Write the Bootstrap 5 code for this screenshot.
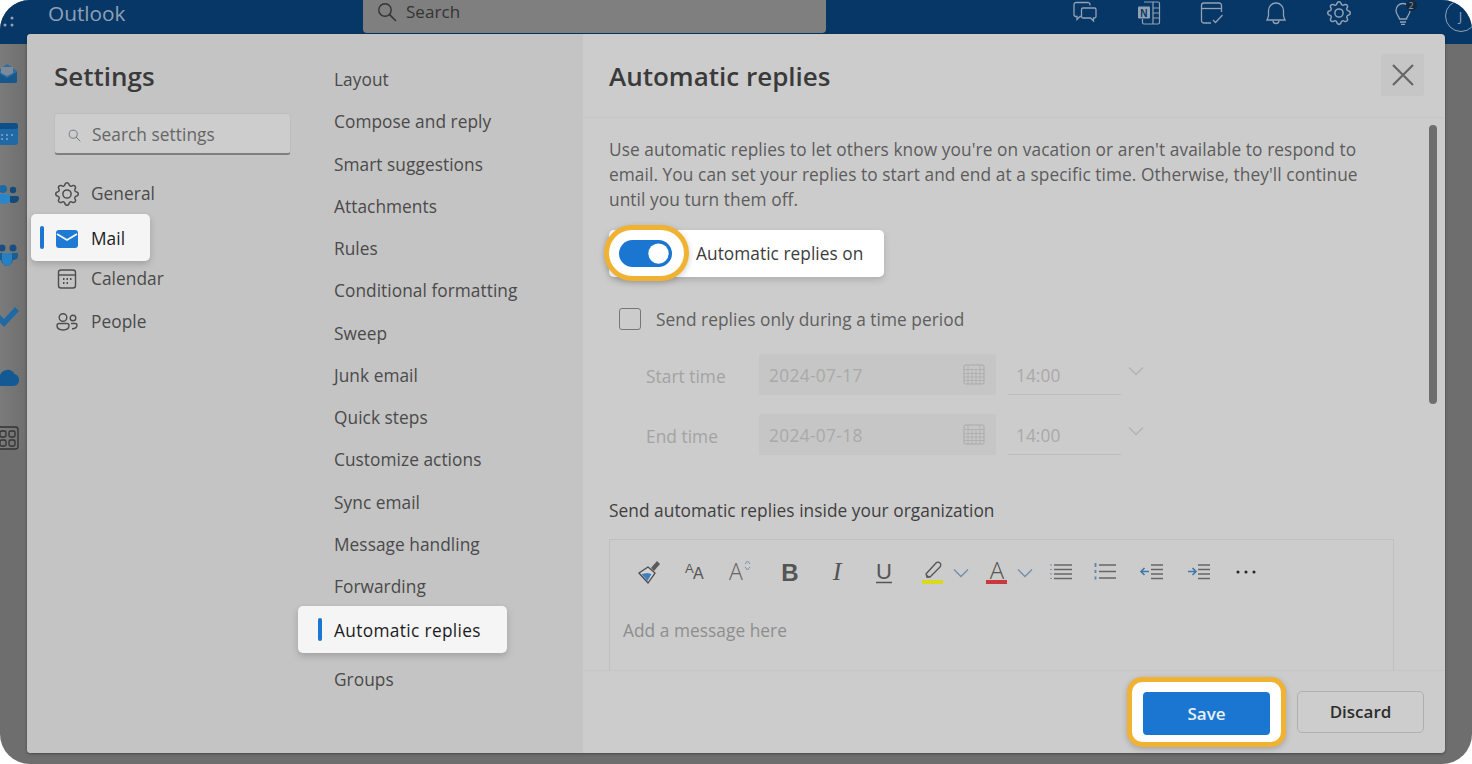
<!DOCTYPE html>
<html lang="en">
<head>
<meta charset="utf-8">
<title>Outlook settings</title>
<link href="https://cdn.jsdelivr.net/npm/bootstrap@5.3.0/dist/css/bootstrap.min.css" rel="stylesheet">
<style>
html,body{height:100%;margin:0;background:#fff;overflow:hidden}
body{font-family:"Open Sans","Noto Sans",sans-serif;font-size:17.3px;color:#4a4a4a;letter-spacing:.05px}
.app{width:1472px;height:764px;border-radius:30px;overflow:hidden;background:#6e6e6e;position:relative}
.topbar{height:44px;background:#073766;align-items:flex-start}
.topbar>*{flex:none}
.waffle{width:48px;height:32px;color:#8ea1b6;padding:8px 0 0 3px}
.brand{font-size:20.800px;color:#8ea1b6;width:315px;line-height:26px;letter-spacing:0}
.searchbox{width:463px;height:33px;background:#7f7f7f;border-radius:0 0 4px 4px;padding:0 0 9px 14px;gap:9px;color:#333;font-size:17px}
.topicons{margin-left:247px;gap:39.5px;padding-top:1px;color:#92a2b3}
.topicons svg{width:24px;height:24px;display:block}
.bulb{position:relative}
.bulb .count{position:absolute;left:15px;top:-1px;width:11px;height:11px;border-radius:50%;background:#14293f;color:#8ea1b6;font-size:9px;text-align:center;line-height:11px}
.avatar{width:32px;height:32px;border:1px solid #8ea1b6;border-radius:50%;margin:0 0 0 30px;color:#8ea1b6;font-size:13px;line-height:30px;text-align:center}
.rail{width:27px;padding-top:17px;gap:36.8px;background:linear-gradient(90deg,#7b7b7b,#6e6e6e)}
.rail svg{width:24px;height:24px;margin-left:-5px;display:block;flex:none}
.settings{position:absolute;left:27px;top:34px;width:1418px;height:719px;border-radius:4px;box-shadow:0 1px 3px rgba(0,0,0,.35);background:#ccc;overflow:visible}
.leftpane{width:556px;background:#c4c4c4;border-radius:4px 0 0 4px;flex:none}
.col-cat{width:271px;padding-left:27px;flex:none}
.title{font-size:26px;font-weight:600;color:#3a3a3a;line-height:36px;letter-spacing:0}
.col-cat .title{margin-top:24px}
.searchset{width:237px;height:42px;margin-top:19px;background:#cdcdcd;border:1px solid #bdbdbd;border-bottom:2px solid #7f7f7f;border-radius:4px;padding:3px 0 0 13px;gap:11px;color:#666}
.catlist{margin-top:17px}
.catlist .nav-link,.sublist .nav-link{color:#4a4a4a;padding:2px 0 0;height:42.250px;display:flex;align-items:center;position:relative;white-space:nowrap}
.catlist .nav-link{gap:12px;padding-left:1px}
.catlist svg{width:24px;height:24px;flex:none;color:#4d4d4d}
.nav-link.current{background:#f5f5f5;color:#1c1c1c;font-weight:500;border-radius:5px;height:47px;box-shadow:0 3px 7px rgba(0,0,0,.18);z-index:2}
.nav-link.current::before{content:"";position:absolute;width:4px;height:23px;top:12px;background:#1a76d0;border-radius:2px}
.catlist .nav-link.current{height:47px;width:119px;margin-left:-23px;padding-left:24px;margin-bottom:-4px}
.catlist .nav-link.current::before{left:9px}
.sublist{padding-top:24px;width:209px;flex:none;flex-wrap:nowrap;align-items:flex-start}
.sublist .nav-link{padding-left:36px}
.sublist .nav-link.current{width:209px;height:47px;margin:-1px 0 5px;letter-spacing:.35px}
.sublist .nav-link.current::before{left:20px}
.rightpane{min-width:0}
.rhead{height:84px;padding:0 21px 0 26px;border-bottom:1px solid #c6c6c6;flex:none}
.rhead .title{padding-top:1px}
.closebtn{width:43px;height:42px;background:#c6c6c6;border:0;border-radius:3px;padding:0;color:#666;margin-top:-2px}
.rbody{height:552px;padding:19px 0 0 26px;position:relative;overflow:hidden;flex:none}
.intro{width:762px;line-height:25px;margin:0 0 17.500px;color:#5c5c5c;letter-spacing:.08px}
.spot{height:47px;background:#fff;border-radius:5px;padding-right:21px;box-shadow:0 3px 7px rgba(0,0,0,.15);color:#3d3d3d}
.spot>span{padding-top:2px}
.ring{width:85px;height:56px;border:5px solid #f0b232;border-radius:28px;background:#fff;margin:-4.500px 7px -4.500px -5px;flex:none;box-shadow:0 2px 6px rgba(0,0,0,.2)}
.form-switch.ring{padding:0 2px 0 0}
.form-switch .autoswitch{width:53px;height:27px;margin:0;background-color:#1a76d0;border:0;float:none;opacity:1}
.timecheck{margin:31px 0 0 10px;gap:15px;color:#5f5f5f;height:22px}
.timecheck>span{padding-top:3px}
.timecheck .form-check-input{width:22px;height:22px;margin:0;background-color:transparent;border:1px solid #777;border-radius:3px;flex:none}
.timerow{margin-left:37px;color:#a3a3a3;height:41px}
.timerow.first{margin-top:24px}
.timerow.second{margin-top:19px}
.timelabel{width:113px;padding-top:6px}
.dateinput{width:237px;height:41px;background:#c6c6c6;padding:0 11px 0 10px;color:#a9a9a9;border-radius:2px;letter-spacing:.35px}
.dateinput>span{padding-top:3px}
.dateinput svg{width:22px;height:22px}
.timeselect{width:113px;height:41px;margin-left:12px;padding:5px 0 0 8px;border-bottom:1px solid #bdbdbd;color:#a9a9a9}
.chev{width:16px;height:10px;margin:-6px 0 0 7px;color:#b2b2b2}
.orghead{margin:43px 0 0;line-height:25px;color:#3f3f3f}
.editor{width:785px;height:200px;margin-top:16px;border:1px solid #bfbfbf;border-bottom:0;padding:20px 0 0 15px}
.tool{width:47px;height:24px;flex:none;display:flex;justify-content:center}
.tool svg{width:24px;height:24px;overflow:visible}
.tool.free{width:24px;margin-left:16px}
.tool.free.first{margin-left:14px}
.tool svg text{font-family:"Liberation Sans",sans-serif;letter-spacing:0}
.tool svg text.thin{font-family:"Open Sans",sans-serif;font-weight:300}
.tool svg text.serif{font-family:"Liberation Serif",serif;font-style:italic}
.chevblue{width:16px;height:10px;margin:8px 0 0 8px;color:#6f8fae;flex:none}
.msg-hint{margin:34px 0 0 -2px;color:#8e8e8e}
.vbar{position:absolute;left:846px;top:7px;width:8px;height:279px;border-radius:4px;background:#6e6e6e}
.rfoot{height:83px;border-top:1px solid #c6c6c6;padding:6px 21px 0 0;gap:11px;flex:none}
.savering{width:159px;height:70px;border:5px solid #f0b232;border-radius:15px;background:#fff;padding-top:3px;box-shadow:0 2px 6px rgba(0,0,0,.2)}
.btn-save{width:127px;height:43px;background:#1a76d0;border:0;border-radius:4px;color:#e8f0f8;font-weight:600;font-size:17px;padding:1px 0 0}
.btn-discard{width:127px;height:42px;margin-top:14px;background:#cdcdcd;border:1px solid #b0b0b0;border-radius:5px;color:#2e2e2e;font-weight:600;font-size:17px;padding:0}
</style>
</head>
<body>
<svg width="0" height="0" class="position-absolute">
  <defs>
    <symbol id="gear" viewBox="0 0 16 16"><path fill="currentColor" d="M8 4.754a3.246 3.246 0 1 0 0 6.492 3.246 3.246 0 0 0 0-6.492zM5.754 8a2.246 2.246 0 1 1 4.492 0 2.246 2.246 0 0 1-4.492 0z"/><path fill="currentColor" d="M9.796 1.343c-.527-1.79-3.065-1.79-3.592 0l-.094.319a.873.873 0 0 1-1.255.52l-.292-.16c-1.64-.892-3.433.902-2.54 2.541l.159.292a.873.873 0 0 1-.52 1.255l-.319.094c-1.79.527-1.79 3.065 0 3.592l.319.094a.873.873 0 0 1 .52 1.255l-.16.292c-.892 1.64.901 3.434 2.541 2.54l.292-.159a.873.873 0 0 1 1.255.52l.094.319c.527 1.79 3.065 1.79 3.592 0l.094-.319a.873.873 0 0 1 1.255-.52l.292.16c1.64.893 3.434-.902 2.54-2.541l-.159-.292a.873.873 0 0 1 .52-1.255l.319-.094c1.79-.527 1.79-3.065 0-3.592l-.319-.094a.873.873 0 0 1-.52-1.255l.16-.292c.893-1.64-.902-3.433-2.541-2.54l-.292.159a.873.873 0 0 1-1.255-.52l-.094-.319zm-2.633.283c.246-.835 1.428-.835 1.674 0l.094.319a1.873 1.873 0 0 0 2.693 1.115l.291-.16c.764-.415 1.6.42 1.184 1.185l-.159.292a1.873 1.873 0 0 0 1.116 2.692l.318.094c.835.246.835 1.428 0 1.674l-.319.094a1.873 1.873 0 0 0-1.115 2.693l.16.291c.415.764-.42 1.6-1.185 1.184l-.291-.159a1.873 1.873 0 0 0-2.693 1.116l-.094.318c-.246.835-1.428.835-1.674 0l-.094-.319a1.873 1.873 0 0 0-2.692-1.115l-.292.16c-.764.415-1.6-.42-1.184-1.185l.159-.291A1.873 1.873 0 0 0 1.945 8.93l-.319-.094c-.835-.246-.835-1.428 0-1.674l.319-.094A1.873 1.873 0 0 0 3.06 4.377l-.16-.292c-.415-.764.42-1.6 1.185-1.184l.292.159a1.873 1.873 0 0 0 2.692-1.115l.094-.319z"/></symbol>
    <symbol id="searchico" viewBox="0 0 20 20"><circle cx="8" cy="8" r="6.200" fill="none" stroke="currentColor" stroke-width="1.400"/><path d="M12.600 12.600L18.500 18.500" stroke="currentColor" stroke-width="1.500" stroke-linecap="round"/></symbol>
    <symbol id="dcal" viewBox="0 0 22 22"><rect x="1" y="2" width="20" height="19" rx="1.500" fill="none" stroke="currentColor"/><path d="M1 6.500h20M1 10.500h20M1 14h20M1 17.500h20M5 2v19M9 6.500v14.500M13 6.500v14.500M17 2v19" stroke="currentColor" stroke-width=".7" fill="none"/></symbol>
    <symbol id="chevron" viewBox="0 0 16 10"><path d="M1 1.500l7 7 7-7" fill="none" stroke="currentColor" stroke-width="1.300"/></symbol>
  </defs>
</svg>
<div class="app">
  <header class="topbar d-flex">
    <div class="waffle">
      <svg width="12" height="14" viewBox="0 0 12 14" fill="currentColor"><circle cx="2" cy="10" r="1.500"/><circle cx="9" cy="3" r="1.500"/><circle cx="9" cy="10" r="1.500"/></svg>
    </div>
    <div class="brand">Outlook</div>
    <div class="searchbox d-flex align-items-center"><svg width="20" height="20" class="flex-none"><use href="#searchico"/></svg><span>Search</span></div>
    <div class="topicons d-flex">
      <svg viewBox="0 0 24 24" fill="none" stroke="currentColor" stroke-width="1.300"><path d="M17 4.500V3.500a2 2 0 0 0-2-2H3a2 2 0 0 0-2 2v10a2 2 0 0 0 2 2h1v3l3-3h1"/><path d="M10 7h11.500a1.500 1.500 0 0 1 1.500 1.500v7a1.500 1.500 0 0 1-1.500 1.500h-1v3l-3-3H10a1.500 1.500 0 0 1-1.500-1.500v-7A1.500 1.500 0 0 1 10 7z"/></svg>
      <svg viewBox="0 0 24 24" fill="none" stroke="currentColor" stroke-width="1.200"><path d="M7 1h14a1.500 1.500 0 0 1 1.500 1.500v19A1.500 1.500 0 0 1 21 23H7a1.500 1.500 0 0 1-1.500-1.500V18"/><path d="M16 1v22M16 7h6.500M16 12h6.500M16 17h6.500"/><rect x="1" y="5.500" width="12" height="12" rx="1" fill="#92a2b3" stroke="none"/><text x="7" y="15.500" text-anchor="middle" font-size="10" font-weight="700" fill="#073766" stroke="none" font-family="Liberation Sans">N</text></svg>
      <svg viewBox="0 0 24 24" fill="none" stroke="currentColor" stroke-width="1.300"><path d="M11 22H4a2.500 2.500 0 0 1-2.500-2.500v-15A2.500 2.500 0 0 1 4 2h15a2.500 2.500 0 0 1 2.500 2.500V11"/><path d="M1.500 7.500h20"/><path d="M13 19l2.500 2.500 7-7.500"/></svg>
      <svg viewBox="0 0 24 24" fill="none" stroke="currentColor" stroke-width="1.300"><path d="M12 2a7.500 7.500 0 0 0-7.500 7.500V15L3 19h18l-1.500-4V9.500A7.500 7.500 0 0 0 12 2z"/><path d="M9 19.500a3 3 0 0 0 6 0"/></svg>
      <svg viewBox="0 0 16 16"><use href="#gear"/></svg>
      <span class="bulb"><svg viewBox="0 0 24 24" fill="none" stroke="currentColor" stroke-width="1.300"><path d="M8.500 18c0-2.500-3.500-4-3.500-8.500a7 7 0 0 1 14 0c0 4.500-3.500 6-3.500 8.500z"/><path d="M9 21h6M10 23.500h4"/></svg><span class="count">2</span></span>
    </div>
    <div class="avatar">J</div>
  </header>
  <nav class="rail d-flex flex-column">
    <svg viewBox="0 0 24 24"><path d="M2 10l10-7 10 7v10a2 2 0 0 1-2 2H4a2 2 0 0 1-2-2z" fill="#2a6ea5"/><path d="M6 6h12v6l-6 3-6-3z" fill="#7b8a96"/><path d="M2 11l10 6 10-6v9a2 2 0 0 1-2 2H4a2 2 0 0 1-2-2z" fill="#17578c"/></svg>
    <svg viewBox="0 0 24 24"><rect x="1" y="1" width="22" height="22" rx="3" fill="#1f6aa6"/><rect x="1" y="1" width="22" height="6" rx="3" fill="#0f4f87"/><path d="M6 12h2v2H6zM11 12h2v2h-2zM16 12h2v2h-2zM6 16h2v2H6zM11 16h2v2h-2z" fill="#6e96b8"/></svg>
    <svg viewBox="0 0 24 24"><circle cx="8" cy="6" r="4" fill="#1b6aa5"/><circle cx="18" cy="7" r="3.200" fill="#134a78"/><path d="M0 14a3 3 0 0 1 3-3h10a3 3 0 0 1 3 3c0 5-3 7-7 7s-9-2-9-7z" fill="#2a86c9"/><path d="M15 13h7a2 2 0 0 1 2 2c0 3-2 5-6 5-1 0-2 0-3-1z" fill="#134a78"/></svg>
    <svg viewBox="0 0 24 24"><circle cx="7" cy="5" r="3.500" fill="#184f80"/><circle cx="18" cy="5" r="3.500" fill="#184f80"/><path d="M1 10h22v3c0 3-3 4-5 4-1 4-4 6-6 6s-5-2-6-6c-2 0-5-1-5-4z" fill="#1a5e96"/><path d="M7 10h10v7c0 3-2 6-5 6s-5-3-5-6z" fill="#2a7fc0"/></svg>
    <svg viewBox="0 0 24 24"><path d="M0 14l4-4 5 5L20 3l4 4L9 23z" fill="#1f6aa6"/></svg>
    <svg viewBox="0 0 24 24"><path d="M6 21a5.500 5.500 0 0 1-1-10.900A8 8 0 0 1 19.500 9 6 6 0 0 1 24 15a5.500 5.500 0 0 1-5.500 6z" fill="#135a94"/></svg>
    <svg viewBox="0 0 24 24" fill="none" stroke="#333" stroke-width="1.300"><rect x="1" y="1" width="22" height="22" rx="2.500"/><rect x="5" y="5" width="6" height="6" rx="1.500"/><rect x="14" y="5" width="6" height="6" rx="1.500"/><rect x="5" y="14" width="6" height="6" rx="1.500"/><rect x="14" y="14" width="6" height="6" rx="1.500"/></svg>
  </nav>

  <section class="settings d-flex">
    <aside class="leftpane d-flex">
      <div class="col-cat">
        <div class="title">Settings</div>
        <div class="searchset d-flex align-items-center"><svg width="13" height="13" class="text-secondary"><use href="#searchico"/></svg><span>Search settings</span></div>
        <nav class="nav flex-column catlist">
          <a class="nav-link" href="#"><svg viewBox="0 0 16 16"><use href="#gear"/></svg>General</a>
          <a class="nav-link current" href="#"><svg viewBox="0 0 24 24"><path d="M1 6a3 3 0 0 1 3-3h16a3 3 0 0 1 3 3v12a3 3 0 0 1-3 3H4a3 3 0 0 1-3-3z" fill="#1f7ad4"/><path d="M2 7l10 6 10-6" fill="none" stroke="#f5f5f5" stroke-width="1.800"/></svg>Mail</a>
          <a class="nav-link" href="#"><svg viewBox="0 0 24 24" fill="none" stroke="currentColor" stroke-width="1.400"><rect x="3.500" y="3" width="17" height="18" rx="2.500"/><path d="M3.500 8h17"/><path d="M8 12h1.500M11.500 12H13M15 12h1.500M8 16h1.500M11.500 16H13" stroke-width="2"/></svg>Calendar</a>
          <a class="nav-link" href="#"><svg viewBox="0 0 24 24" fill="none" stroke="currentColor" stroke-width="1.400"><circle cx="8" cy="7.500" r="3.800"/><circle cx="18" cy="8" r="2.800"/><path d="M2 15.500a2 2 0 0 1 2-2h8a2 2 0 0 1 2 2c0 3-2.500 4.500-6 4.500s-6-1.500-6-4.500z"/><path d="M16 13.500h4.500a1.500 1.500 0 0 1 1.500 1.500c0 2.500-2 4-5 3.800"/></svg>People</a>
        </nav>
      </div>
      <nav class="nav flex-column sublist">
        <a class="nav-link" href="#">Layout</a>
        <a class="nav-link" href="#">Compose and reply</a>
        <a class="nav-link" href="#">Smart suggestions</a>
        <a class="nav-link" href="#">Attachments</a>
        <a class="nav-link" href="#">Rules</a>
        <a class="nav-link" href="#">Conditional formatting</a>
        <a class="nav-link" href="#">Sweep</a>
        <a class="nav-link" href="#">Junk email</a>
        <a class="nav-link" href="#">Quick steps</a>
        <a class="nav-link" href="#">Customize actions</a>
        <a class="nav-link" href="#">Sync email</a>
        <a class="nav-link" href="#">Message handling</a>
        <a class="nav-link" href="#">Forwarding</a>
        <a class="nav-link current" href="#">Automatic replies</a>
        <a class="nav-link" href="#">Groups</a>
      </nav>
    </aside>

    <main class="rightpane flex-grow-1 d-flex flex-column">
      <div class="rhead d-flex align-items-center justify-content-between">
        <div class="title">Automatic replies</div>
        <button class="closebtn d-flex align-items-center justify-content-center" type="button" aria-label="Close"><svg width="24" height="24" viewBox="0 0 24 24"><path d="M2 2l20 20M22 2L2 22" stroke="currentColor" stroke-width="2.200" fill="none"/></svg></button>
      </div>
      <div class="rbody">
        <p class="intro">Use automatic replies to let others know you're on vacation or aren't available to respond to email. You can set your replies to start and end at a specific time. Otherwise, they'll continue until you turn them off.</p>
        <div class="spot d-inline-flex align-items-center">
          <div class="ring d-flex align-items-center justify-content-center form-switch"><input class="form-check-input autoswitch" type="checkbox" role="switch" checked aria-label="Automatic replies on"></div>
          <span>Automatic replies on</span>
        </div>
        <div class="timecheck d-flex align-items-center"><input class="form-check-input" type="checkbox" aria-label="Send replies only during a time period"><span>Send replies only during a time period</span></div>
        <div class="timerow first d-flex">
          <div class="timelabel d-flex align-items-center">Start time</div>
          <div class="dateinput d-flex align-items-center justify-content-between"><span>2024-07-17</span><svg><use href="#dcal"/></svg></div>
          <div class="timeselect d-flex align-items-center">14:00</div>
          <svg class="chev align-self-center"><use href="#chevron"/></svg>
        </div>
        <div class="timerow second d-flex">
          <div class="timelabel d-flex align-items-center">End time</div>
          <div class="dateinput d-flex align-items-center justify-content-between"><span>2024-07-18</span><svg><use href="#dcal"/></svg></div>
          <div class="timeselect d-flex align-items-center">14:00</div>
          <svg class="chev align-self-center"><use href="#chevron"/></svg>
        </div>
        <p class="orghead">Send automatic replies inside your organization</p>
        <div class="editor">
          <div class="d-flex">
            <span class="tool"><svg viewBox="0 0 24 24"><path d="M2 13l9-6 7 6-7 10z" fill="#d4d4d4" stroke="#4a4a4a" stroke-width="1.300"/><path d="M4.500 14l6-1 4 1-4 7z" fill="#3f7fc0"/><path d="M14 8l6-7 3 3-6 7z" fill="#5a5a5a"/></svg></span>
            <span class="tool"><svg viewBox="0 0 24 24"><text x="1" y="13" font-size="13" fill="#555">A</text><text x="9" y="19" font-size="16" fill="#555">A</text></svg></span>
            <span class="tool"><svg viewBox="0 0 24 24"><text class="thin" x="-2" y="20" font-size="23" fill="#666">A</text><path d="M14 4l2.500-3L19 4M14 7l2.500 3L19 7" fill="none" stroke="#6f8fae"/></svg></span>
            <span class="tool"><svg viewBox="0 0 24 24"><text x="12" y="21" text-anchor="middle" font-size="24" font-weight="700" fill="#555">B</text></svg></span>
            <span class="tool"><svg viewBox="0 0 24 24"><text class="serif" x="12" y="20" text-anchor="middle" font-size="26" fill="#555">I</text></svg></span>
            <span class="tool"><svg viewBox="0 0 24 24"><text x="12" y="19" text-anchor="middle" font-size="22" fill="#555">U</text><path d="M4 22.500h16" stroke="#555" stroke-width="1.500"/></svg></span>
            <span class="tool free first"><svg viewBox="0 0 24 24"><path d="M6 17l-1-3L15 3c1-1 3-1 4 0s1 3 0 4L9 17z" fill="none" stroke="#555" stroke-width="1.300"/><path d="M5 14l4 3-3 1z" fill="#555"/><rect x="1" y="20" width="21" height="4" fill="#dbd91c"/></svg></span>
            <svg class="chevblue"><use href="#chevron"/></svg>
            <span class="tool free"><svg viewBox="0 0 24 24"><text class="thin" x="12" y="19" text-anchor="middle" font-size="24" fill="#555">A</text><rect x="1" y="20" width="21" height="4" fill="#c9393c"/></svg></span>
            <svg class="chevblue"><use href="#chevron"/></svg>
            <span class="tool free"><svg viewBox="0 0 24 24"><path d="M5 5h18M5 9.500h18M5 14h18M5 18.500h18" stroke="#666" stroke-width="1.500"/><path d="M1 5h2M1 9.500h2M1 14h2M1 18.500h2" stroke="#7f8f9f" stroke-width="1.200"/></svg></span>
            <span class="tool ms-2"><svg viewBox="0 0 24 24"><path d="M6 5h17M6 11.500h17M6 18h17" stroke="#666" stroke-width="1.500"/><path d="M2.500 3v4M2.500 10v3M2.500 16.500v3" stroke="#5c86ad" stroke-width="1.800"/></svg></span>
            <span class="tool"><svg viewBox="0 0 24 24"><path d="M11 5h12M11 9.500h12M11 14h12M11 18.500h12" stroke="#666" stroke-width="1.500"/><path d="M9 11.500H1M4.500 8l-3.500 3.500L4.500 15" fill="none" stroke="#3f77ab" stroke-width="1.600"/></svg></span>
            <span class="tool"><svg viewBox="0 0 24 24"><path d="M11 5h12M11 9.500h12M11 14h12M11 18.500h12" stroke="#666" stroke-width="1.500"/><path d="M1 11.500h8M5.500 8L9 11.500 5.500 15" fill="none" stroke="#3f77ab" stroke-width="1.600"/></svg></span>
            <span class="tool"><svg viewBox="0 0 24 24" fill="#222"><circle cx="4" cy="12" r="1.500"/><circle cx="12" cy="12" r="1.500"/><circle cx="20" cy="12" r="1.500"/></svg></span>
          </div>
          <div class="msg-hint">Add a message here</div>
        </div>
        <div class="vbar"></div>
      </div>
      <footer class="rfoot d-flex justify-content-end align-items-start">
        <div class="savering d-flex align-items-center justify-content-center"><button class="btn btn-save" type="button">Save</button></div>
        <button class="btn btn-discard" type="button">Discard</button>
      </footer>
    </main>
  </section>
</div>
<script src="https://cdn.jsdelivr.net/npm/bootstrap@5.3.0/dist/js/bootstrap.bundle.min.js"></script>
</body>
</html>
